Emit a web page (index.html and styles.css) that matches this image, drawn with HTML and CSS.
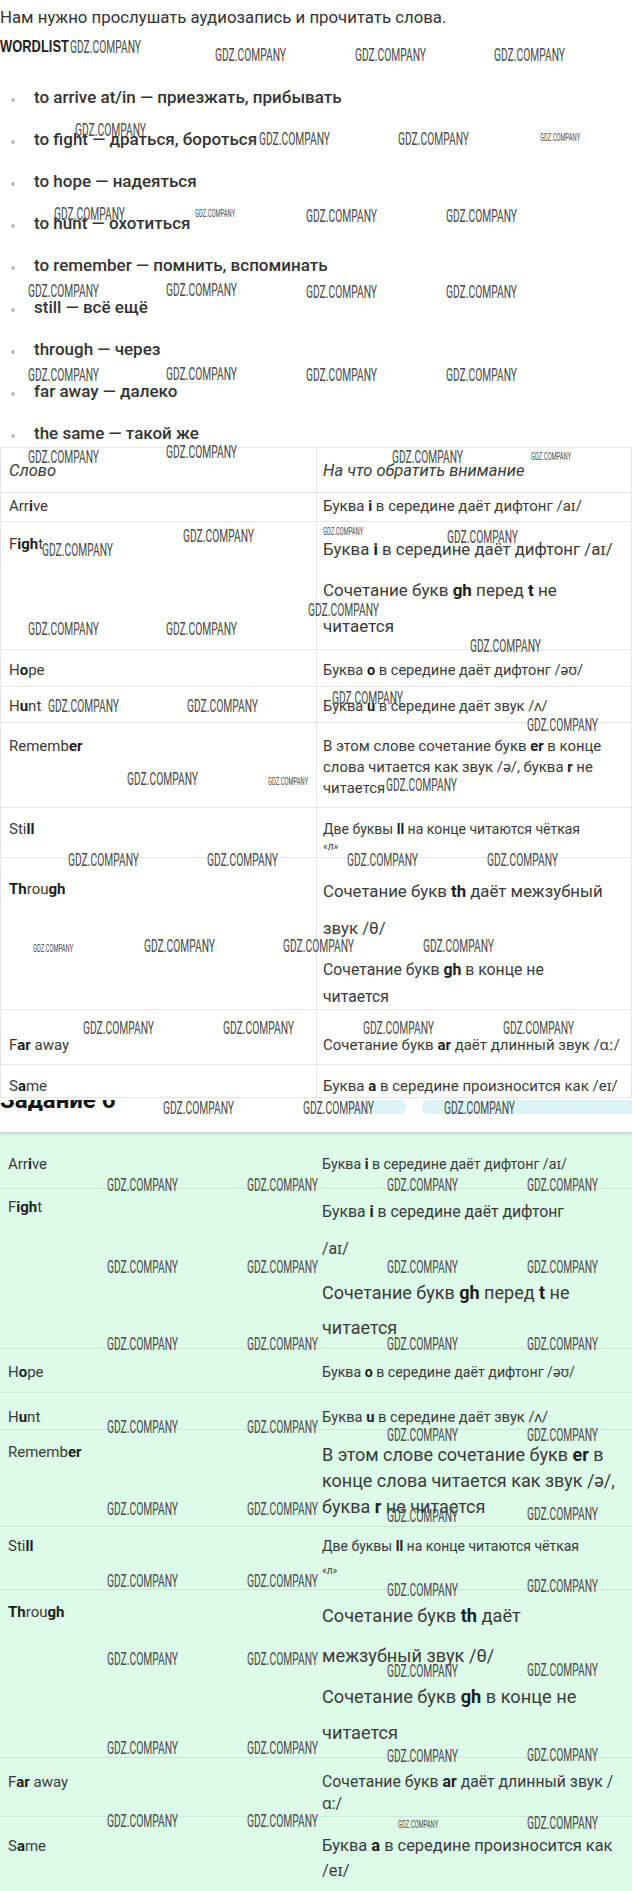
FILE: index.html
```html
<!DOCTYPE html>
<html lang="ru">
<head>
<meta charset="utf-8">
<title>Wordlist</title>
<link rel="stylesheet" href="styles.css">
</head>
<body>
<div class="page">
  <p class="intro">Нам нужно прослушать аудиозапись и прочитать слова.</p>
  <h2 class="wordlist">WORDLIST</h2>
  <ul class="words">
    <li>to arrive at/in — приезжать, прибывать</li>
    <li>to fight — драться, бороться</li>
    <li>to hope — надеяться</li>
    <li>to hunt — охотиться</li>
    <li>to remember — помнить, вспоминать</li>
    <li>still — всё ещё</li>
    <li>through — через</li>
    <li>far away — далеко</li>
    <li>the same — такой же</li>
  </ul>

  <div class="card">
    <div class="tbl plain">
      <div class="row r-head"><div class="c l">Слово</div><div class="c r">На что обратить внимание</div></div>
      <div class="row r-arrive"><div class="c l">Arr<b>i</b>ve</div><div class="c r">Буква <b>i</b> в середине даёт дифтонг /aɪ/</div></div>
      <div class="row r-fight"><div class="c l">F<b>igh</b>t</div><div class="c r"><p class="p1">Буква <b>i</b> в середине даёт дифтонг /aɪ/</p><p class="p2">Сочетание букв <b>gh</b> перед <b>t</b> не<br>читается</p></div></div>
      <div class="row r-hope"><div class="c l">H<b>o</b>pe</div><div class="c r">Буква <b>o</b> в середине даёт дифтонг /əʊ/</div></div>
      <div class="row r-hunt"><div class="c l">H<b>u</b>nt</div><div class="c r">Буква <b>u</b> в середине даёт звук /ʌ/</div></div>
      <div class="row r-rem"><div class="c l">Rememb<b>er</b></div><div class="c r"><p class="p1">В этом слове сочетание букв <b>er</b> в конце<br>слова читается как звук /ə/, буква <b>r</b> не<br>читается</p></div></div>
      <div class="row r-still"><div class="c l">Sti<b>ll</b></div><div class="c r"><p class="p1">Две буквы <b>ll</b> на конце читаются чёткая</p><p class="small">«л»</p></div></div>
      <div class="row r-through"><div class="c l"><b>Th</b>rou<b>gh</b></div><div class="c r"><p class="p1">Сочетание букв <b>th</b> даёт межзубный<br>звук /θ/</p><p class="p2">Сочетание букв <b>gh</b> в конце не<br>читается</p></div></div>
      <div class="row r-far"><div class="c l">F<b>ar</b> away</div><div class="c r">Сочетание букв <b>ar</b> даёт длинный звук /ɑː/</div></div>
      <div class="row r-same"><div class="c l">S<b>a</b>me</div><div class="c r">Буква <b>a</b> в середине произносится как /eɪ/</div></div>
    </div>
    <div class="strip">
      <div class="task-clip"><span class="task-title">Задание 6</span></div>
      <div class="pill pill-a"></div>
      <div class="pill pill-b"></div>
    </div>
  </div>

  <div class="tbl green">
    <div class="row r-arrive"><div class="c l">Arr<b>i</b>ve</div><div class="c r">Буква <b>i</b> в середине даёт дифтонг /aɪ/</div></div>
    <div class="row r-fight"><div class="c l">F<b>igh</b>t</div><div class="c r"><p class="p1">Буква <b>i</b> в середине даёт дифтонг<br>/aɪ/</p><p class="p2">Сочетание букв <b>gh</b> перед <b>t</b> не<br>читается</p></div></div>
    <div class="row r-hope"><div class="c l">H<b>o</b>pe</div><div class="c r">Буква <b>o</b> в середине даёт дифтонг /əʊ/</div></div>
    <div class="row r-hunt"><div class="c l">H<b>u</b>nt</div><div class="c r">Буква <b>u</b> в середине даёт звук /ʌ/</div></div>
    <div class="row r-rem"><div class="c l">Rememb<b>er</b></div><div class="c r"><p class="p1">В этом слове сочетание букв <b>er</b> в<br>конце слова читается как звук /ə/,<br>буква <b>r</b> не читается</p></div></div>
    <div class="row r-still"><div class="c l">Sti<b>ll</b></div><div class="c r"><p class="p1">Две буквы <b>ll</b> на конце читаются чёткая</p><p class="small">«л»</p></div></div>
    <div class="row r-through"><div class="c l"><b>Th</b>rou<b>gh</b></div><div class="c r"><p class="p1">Сочетание букв <b>th</b> даёт<br>межзубный звук /θ/</p><p class="p2">Сочетание букв <b>gh</b> в конце не<br>читается</p></div></div>
    <div class="row r-far"><div class="c l">F<b>ar</b> away</div><div class="c r"><p class="p1">Сочетание букв <b>ar</b> даёт длинный звук /<br>ɑ:/</p></div></div>
    <div class="row r-same"><div class="c l">S<b>a</b>me</div><div class="c r"><p class="p1">Буква <b>a</b> в середине произносится как<br>/eɪ/</p></div></div>
  </div>

  <span class="wm" style="left:70px;top:38px">GDZ.COMPANY</span>
  <span class="wm" style="left:215px;top:46px">GDZ.COMPANY</span>
  <span class="wm" style="left:355px;top:46px">GDZ.COMPANY</span>
  <span class="wm" style="left:494px;top:46px">GDZ.COMPANY</span>
  <span class="wm" style="left:75px;top:121px">GDZ.COMPANY</span>
  <span class="wm" style="left:259px;top:130px">GDZ.COMPANY</span>
  <span class="wm" style="left:398px;top:130px">GDZ.COMPANY</span>
  <span class="wm sm" style="left:540px;top:133px">GDZ.COMPANY</span>
  <span class="wm" style="left:54px;top:205px">GDZ.COMPANY</span>
  <span class="wm sm" style="left:195px;top:209px">GDZ.COMPANY</span>
  <span class="wm" style="left:306px;top:207px">GDZ.COMPANY</span>
  <span class="wm" style="left:446px;top:207px">GDZ.COMPANY</span>
  <span class="wm" style="left:28px;top:282px">GDZ.COMPANY</span>
  <span class="wm" style="left:166px;top:281px">GDZ.COMPANY</span>
  <span class="wm" style="left:306px;top:283px">GDZ.COMPANY</span>
  <span class="wm" style="left:446px;top:283px">GDZ.COMPANY</span>
  <span class="wm" style="left:28px;top:366px">GDZ.COMPANY</span>
  <span class="wm" style="left:166px;top:365px">GDZ.COMPANY</span>
  <span class="wm" style="left:306px;top:366px">GDZ.COMPANY</span>
  <span class="wm" style="left:446px;top:366px">GDZ.COMPANY</span>
  <span class="wm" style="left:28px;top:448px">GDZ.COMPANY</span>
  <span class="wm" style="left:166px;top:443px">GDZ.COMPANY</span>
  <span class="wm" style="left:392px;top:448px">GDZ.COMPANY</span>
  <span class="wm sm" style="left:531px;top:452px">GDZ.COMPANY</span>
  <span class="wm" style="left:183px;top:527px">GDZ.COMPANY</span>
  <span class="wm" style="left:42px;top:541px">GDZ.COMPANY</span>
  <span class="wm sm" style="left:323px;top:527px">GDZ.COMPANY</span>
  <span class="wm" style="left:447px;top:528px">GDZ.COMPANY</span>
  <span class="wm" style="left:308px;top:601px">GDZ.COMPANY</span>
  <span class="wm" style="left:28px;top:620px">GDZ.COMPANY</span>
  <span class="wm" style="left:166px;top:620px">GDZ.COMPANY</span>
  <span class="wm" style="left:470px;top:637px">GDZ.COMPANY</span>
  <span class="wm" style="left:332px;top:689px">GDZ.COMPANY</span>
  <span class="wm" style="left:48px;top:697px">GDZ.COMPANY</span>
  <span class="wm" style="left:187px;top:697px">GDZ.COMPANY</span>
  <span class="wm" style="left:527px;top:716px">GDZ.COMPANY</span>
  <span class="wm" style="left:127px;top:770px">GDZ.COMPANY</span>
  <span class="wm sm" style="left:268px;top:777px">GDZ.COMPANY</span>
  <span class="wm" style="left:386px;top:776px">GDZ.COMPANY</span>
  <span class="wm" style="left:68px;top:851px">GDZ.COMPANY</span>
  <span class="wm" style="left:207px;top:851px">GDZ.COMPANY</span>
  <span class="wm" style="left:347px;top:851px">GDZ.COMPANY</span>
  <span class="wm" style="left:487px;top:851px">GDZ.COMPANY</span>
  <span class="wm sm" style="left:33px;top:944px">GDZ.COMPANY</span>
  <span class="wm" style="left:144px;top:937px">GDZ.COMPANY</span>
  <span class="wm" style="left:283px;top:937px">GDZ.COMPANY</span>
  <span class="wm" style="left:423px;top:937px">GDZ.COMPANY</span>
  <span class="wm" style="left:83px;top:1019px">GDZ.COMPANY</span>
  <span class="wm" style="left:223px;top:1019px">GDZ.COMPANY</span>
  <span class="wm" style="left:363px;top:1019px">GDZ.COMPANY</span>
  <span class="wm" style="left:503px;top:1019px">GDZ.COMPANY</span>
  <span class="wm" style="left:163px;top:1099px">GDZ.COMPANY</span>
  <span class="wm" style="left:303px;top:1099px">GDZ.COMPANY</span>
  <span class="wm" style="left:444px;top:1099px">GDZ.COMPANY</span>
  <span class="wm" style="left:107px;top:1176px">GDZ.COMPANY</span>
  <span class="wm" style="left:247px;top:1176px">GDZ.COMPANY</span>
  <span class="wm" style="left:387px;top:1176px">GDZ.COMPANY</span>
  <span class="wm" style="left:527px;top:1176px">GDZ.COMPANY</span>
  <span class="wm" style="left:107px;top:1258px">GDZ.COMPANY</span>
  <span class="wm" style="left:247px;top:1258px">GDZ.COMPANY</span>
  <span class="wm" style="left:387px;top:1258px">GDZ.COMPANY</span>
  <span class="wm" style="left:527px;top:1258px">GDZ.COMPANY</span>
  <span class="wm" style="left:107px;top:1335px">GDZ.COMPANY</span>
  <span class="wm" style="left:247px;top:1335px">GDZ.COMPANY</span>
  <span class="wm" style="left:387px;top:1335px">GDZ.COMPANY</span>
  <span class="wm" style="left:527px;top:1335px">GDZ.COMPANY</span>
  <span class="wm" style="left:107px;top:1418px">GDZ.COMPANY</span>
  <span class="wm" style="left:247px;top:1418px">GDZ.COMPANY</span>
  <span class="wm" style="left:387px;top:1426px">GDZ.COMPANY</span>
  <span class="wm" style="left:527px;top:1426px">GDZ.COMPANY</span>
  <span class="wm" style="left:107px;top:1500px">GDZ.COMPANY</span>
  <span class="wm" style="left:247px;top:1500px">GDZ.COMPANY</span>
  <span class="wm" style="left:387px;top:1507px">GDZ.COMPANY</span>
  <span class="wm" style="left:527px;top:1505px">GDZ.COMPANY</span>
  <span class="wm" style="left:107px;top:1572px">GDZ.COMPANY</span>
  <span class="wm" style="left:247px;top:1572px">GDZ.COMPANY</span>
  <span class="wm" style="left:387px;top:1581px">GDZ.COMPANY</span>
  <span class="wm" style="left:527px;top:1577px">GDZ.COMPANY</span>
  <span class="wm" style="left:107px;top:1650px">GDZ.COMPANY</span>
  <span class="wm" style="left:247px;top:1650px">GDZ.COMPANY</span>
  <span class="wm" style="left:387px;top:1662px">GDZ.COMPANY</span>
  <span class="wm" style="left:527px;top:1661px">GDZ.COMPANY</span>
  <span class="wm" style="left:107px;top:1739px">GDZ.COMPANY</span>
  <span class="wm" style="left:247px;top:1739px">GDZ.COMPANY</span>
  <span class="wm" style="left:387px;top:1747px">GDZ.COMPANY</span>
  <span class="wm" style="left:527px;top:1746px">GDZ.COMPANY</span>
  <span class="wm" style="left:107px;top:1812px">GDZ.COMPANY</span>
  <span class="wm" style="left:247px;top:1812px">GDZ.COMPANY</span>
  <span class="wm sm" style="left:398px;top:1820px">GDZ.COMPANY</span>
  <span class="wm" style="left:527px;top:1814px">GDZ.COMPANY</span>
</div>
</body>
</html>
```

FILE: styles.css
```css
html, body {
  margin: 0;
  padding: 0;
  background: #ffffff;
}

.page {
  position: relative;
  width: 632px;
  min-height: 1891px;
  overflow: hidden;
  font-family: Roboto, "Noto Sans", "Liberation Sans", sans-serif;
  color: #3a3a3a;
}

.intro {
  margin: 0;
  padding-top: 5px;
  font-size: 16.8px;
  line-height: 24px;
  color: #333333;
}

.wordlist {
  margin: 6px 0 0;
  display: inline-block;
  font-family: "Liberation Sans", Arial, sans-serif;
  font-weight: 700;
  font-size: 17px;
  line-height: 24px;
  color: #1e1e1e;
  transform: scaleX(0.76);
  transform-origin: left center;
}

.words {
  list-style: none;
  margin: 17px 0 0;
  padding: 0;
}

.words li {
  position: relative;
  padding: 9px 0 9px 34px;
  font-size: 17px;
  line-height: 24px;
  font-weight: 500;
  color: #333333;
}

.words li:last-child {
  padding-bottom: 2px;
}

.words li::before {
  content: "";
  position: absolute;
  left: 11px;
  top: 22px;
  width: 4px;
  height: 4px;
  border-radius: 50%;
  background: #bdbdbd;
}

/* tables */
.card {
  position: relative;
  z-index: 1;
  background: #ffffff;
  box-shadow: 0 2px 3px rgba(0, 0, 0, 0.14);
}

.tbl {
  box-sizing: border-box;
  width: 632px;
}

.plain {
  border: 1px solid #e6e6e6;
  border-bottom: 0;
}

.row {
  display: grid;
  grid-template-columns: 316px 1fr;
  box-sizing: border-box;
  border-bottom: 1px solid #e6e6e6;
  font-size: 15px;
  line-height: 20px;
}

.c {
  box-sizing: border-box;
}

.c.l {
  padding-left: 8px;
  border-right: 1px solid #e6e6e6;
}

.c.r {
  padding-left: 6px;
}

.c b {
  font-weight: 700;
  color: #1e1e1e;
}

.c p {
  margin: 0;
}

.small {
  font-size: 10px;
}

/* plain table rows */
.plain .r-head { height: 45px; font-style: italic; font-size: 16.5px; }
.plain .r-head .c { padding-top: 13px; }
.plain .r-arrive { height: 29px; }
.plain .r-arrive .c { padding-top: 3px; }
.plain .r-fight { height: 128px; }
.plain .r-fight .l { padding-top: 12px; }
.plain .r-fight .r { padding-top: 8px; }
.plain .r-fight .p1 { font-size: 16.8px; line-height: 38px; }
.plain .r-fight .p2 { font-size: 17px; line-height: 36px; margin-top: 4px; }
.plain .r-hope { height: 37px; }
.plain .r-hope .c { padding-top: 10px; }
.plain .r-hope .r { font-size: 14.6px; }
.plain .r-hunt { height: 36px; }
.plain .r-hunt .c { padding-top: 9px; }
.plain .r-hunt .r { font-size: 14.6px; }
.plain .r-rem { height: 85px; }
.plain .r-rem .l { padding-top: 13px; }
.plain .r-rem .r { padding-top: 13px; }
.plain .r-rem .p1 { font-size: 14.9px; line-height: 21px; }
.plain .r-still { height: 50px; }
.plain .r-still .c { padding-top: 11px; }
.plain .r-still .p1 { font-size: 14px; }
.plain .r-still .small { line-height: 16px; }
.plain .r-through { height: 152px; }
.plain .r-through .l { padding-top: 21px; }
.plain .r-through .r { padding-top: 15px; }
.plain .r-through .p1 { font-size: 16.8px; line-height: 37px; }
.plain .r-through .p2 { font-size: 15.8px; line-height: 27px; margin-top: 9px; }
.plain .r-far { height: 55px; }
.plain .r-far .c { padding-top: 25px; }
.plain .r-same { height: 33px; }
.plain .r-same .c { padding-top: 11px; }

/* strip under the first table */
.strip {
  display: flex;
  align-items: flex-start;
  height: 34px;
  padding-top: 2px;
  box-sizing: border-box;
  background: #ffffff;
}

.task-clip {
  flex: none;
  width: 346px;
  height: 11px;
  overflow: hidden;
}

.task-title {
  display: block;
  margin-top: -12px;
  font-size: 24px;
  line-height: 24px;
  font-weight: 700;
  color: #111111;
}

.pill {
  height: 14px;
  border-radius: 6px;
  background: #dcf3f8;
}

.pill-a {
  width: 60px;
}

.pill-b {
  flex: 1;
  margin-left: 16px;
  border-radius: 6px 0 0 6px;
}

/* green table */
.green {
  background: #dcfbe8;
}

.green .row {
  border-bottom-color: #cde6d7;
}

.green .c.l {
  border-right-color: #e4f6ea;
}

.green .r-arrive { height: 57px; }
.green .r-arrive .c { padding-top: 22px; }
.green .r-arrive .r { font-size: 14.2px; }
.green .r-fight { height: 160px; }
.green .r-fight .l { padding-top: 8px; }
.green .r-fight .r { padding-top: 4px; }
.green .r-fight .p1 { font-size: 15.8px; line-height: 37px; }
.green .r-fight .p2 { font-size: 18px; line-height: 35px; margin-top: 8px; }
.green .r-hope { height: 44px; }
.green .r-hope .c { padding-top: 13px; }
.green .r-hope .r { font-size: 14.2px; }
.green .r-hunt { height: 37px; }
.green .r-hunt .c { padding-top: 14px; }
.green .r-hunt .r { font-size: 14.7px; }
.green .r-rem { height: 97px; }
.green .r-rem .c { padding-top: 12px; }
.green .r-rem .p1 { font-size: 18px; line-height: 26px; }
.green .r-still { height: 63px; }
.green .r-still .c { padding-top: 9px; }
.green .r-still .p1 { font-size: 14px; }
.green .r-still .small { line-height: 30px; }
.green .r-through { height: 168px; }
.green .r-through .l { padding-top: 12px; }
.green .r-through .r { padding-top: 6px; }
.green .r-through .p1 { font-size: 18.2px; line-height: 40px; }
.green .r-through .p2 { font-size: 18.2px; line-height: 36px; margin-top: 3px; }
.green .r-far { height: 59px; }
.green .r-far .l { padding-top: 14px; }
.green .r-far .r { padding-top: 13px; }
.green .r-far .p1 { font-size: 15.8px; line-height: 22px; }
.green .r-same { height: 74px; border-bottom: 0; }
.green .r-same .l { padding-top: 19px; }
.green .r-same .r { padding-top: 16px; }
.green .r-same .p1 { font-size: 16.4px; line-height: 25px; }

/* watermarks */
.wm {
  position: absolute;
  z-index: 5;
  font-family: Roboto, "Liberation Sans", sans-serif;
  font-size: 18px;
  line-height: 18px;
  font-weight: 400;
  color: #4a4a4a;
  white-space: nowrap;
  transform: scaleX(0.57);
  transform-origin: left top;
  pointer-events: none;
}

.wm.sm {
  font-size: 10px;
  line-height: 10px;
  transform: scaleX(0.58);
}
```
